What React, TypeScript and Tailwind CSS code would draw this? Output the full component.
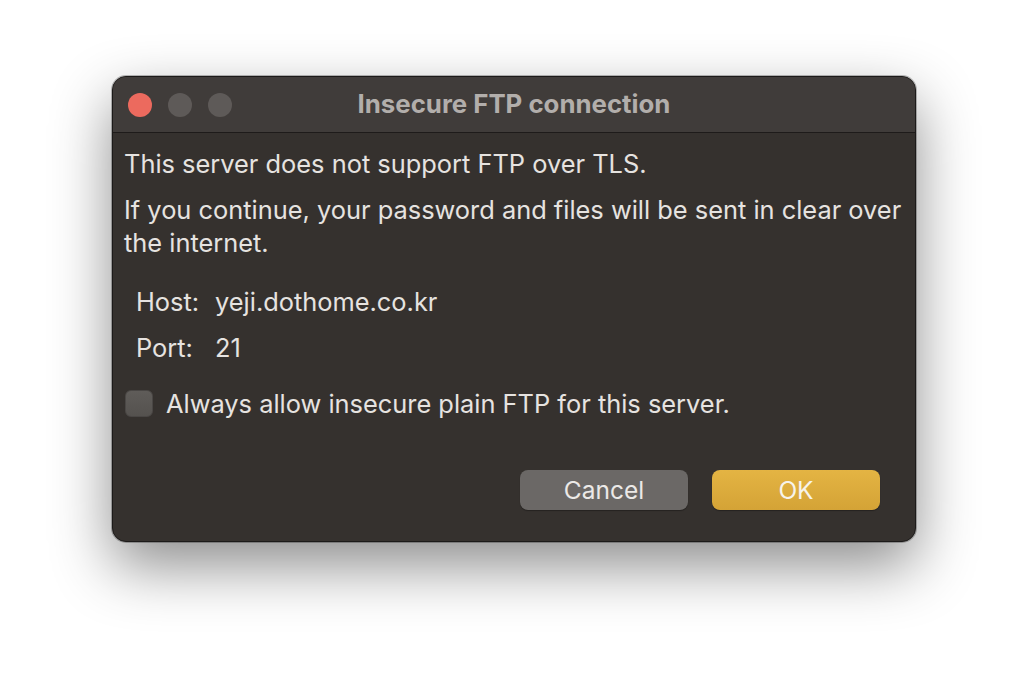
import React from "react";

export default function App() {
  return (
    <div
      className="w-[1028px] h-[690px] bg-white flex justify-center pt-[76px] overflow-hidden"
      style={{ fontFamily: "Inter, 'Noto Sans', sans-serif" }}
    >
      <div className="w-[804px] h-[466px] rounded-[14px] bg-[#35312e] border border-[#1c1a19] shadow-[0_24px_60px_rgba(0,0,0,0.45),0_0_0_1px_rgba(0,0,0,0.25)] flex flex-col overflow-hidden">
        <div className="h-[56px] shrink-0 bg-[#403c3a] border-b border-[#1e1b1a] grid grid-cols-[1fr_auto_1fr] items-center">
          <div className="flex items-center gap-[16px] pl-[15px]">
            <div className="w-[24px] h-[24px] rounded-full bg-[#ec6a5e]" />
            <div className="w-[24px] h-[24px] rounded-full bg-[#5e5a58]" />
            <div className="w-[24px] h-[24px] rounded-full bg-[#5e5a58]" />
          </div>
          <div className="text-[25.8px] leading-[30px] pb-[2px] font-bold text-[#b2aeab]">Insecure FTP connection</div>
          <div />
        </div>
        <div className="flex flex-col pl-[11px] pt-[14px] text-[25.4px] leading-[33px] text-[#e6e3e0]">
          <div>This server does not support FTP over TLS.</div>
          <div className="mt-[13px]">
            <span className="whitespace-nowrap">If you continue, your password and files will be sent in clear over</span>
            <br />
            the internet.
          </div>
          <div className="mt-[26px] pl-[12px] grid grid-cols-[79px_1fr] gap-y-[13px]">
            <div>Host:</div>
            <div>yeji.dothome.co.kr</div>
            <div>Port:</div>
            <div>21</div>
          </div>
          <div className="mt-[23px] flex items-center gap-[13px]">
            <div className="ml-[1px] w-[28px] h-[27px] rounded-[6px] bg-gradient-to-b from-[#5f5c59] to-[#55524f] border border-[#4a4745]" />
            <div>Always allow insecure plain FTP for this server.</div>
          </div>
        </div>
        <div className="mt-auto pb-[31px] pr-[35px] flex justify-end gap-[24px]">
          <button className="w-[168px] h-[40px] rounded-[8px] bg-[#6b6866] text-[#ebe9e7] text-[24.5px] leading-none flex items-center justify-center shadow-[0_1px_1px_rgba(0,0,0,0.3)]">
            Cancel
          </button>
          <button className="w-[168px] h-[40px] rounded-[8px] bg-gradient-to-b from-[#e4b443] to-[#d4a336] text-[#f7f3ea] text-[24.5px] leading-none flex items-center justify-center shadow-[0_1px_1px_rgba(0,0,0,0.3)]">
            OK
          </button>
        </div>
      </div>
    </div>
  );
}
